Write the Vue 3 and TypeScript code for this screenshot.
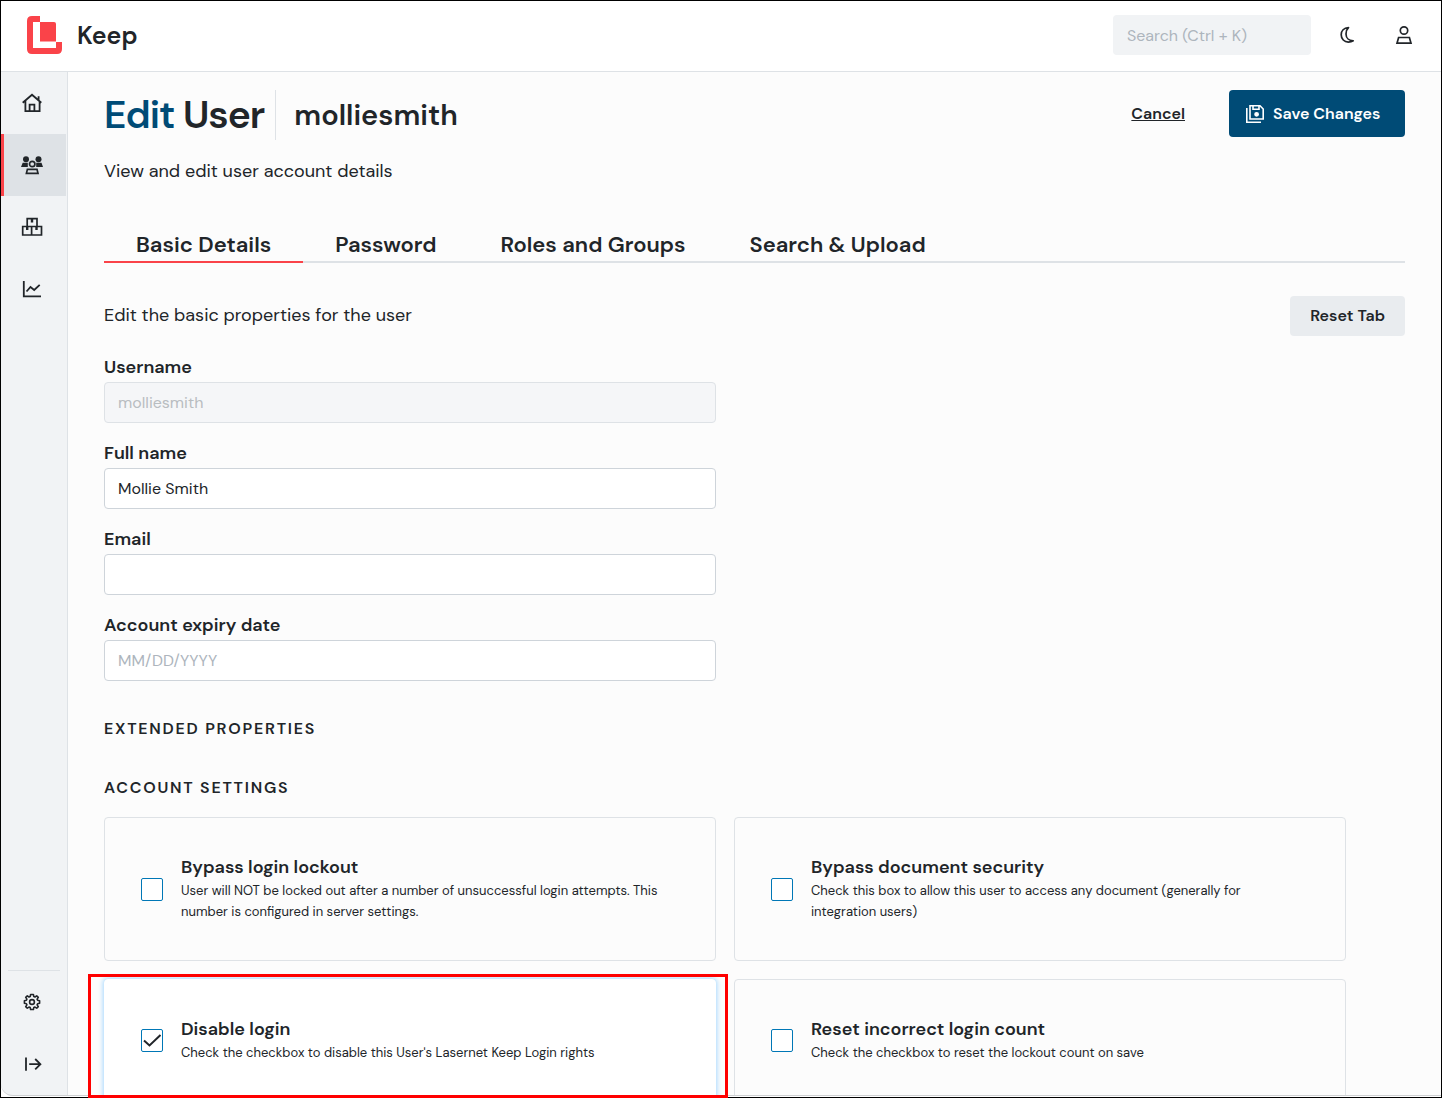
<script setup lang="ts">
import { reactive, ref } from 'vue'

interface Setting {
  id: string
  title: string
  text: string
  checked: boolean
  marked?: boolean
}

const tabs: string[] = ['Basic Details', 'Password', 'Roles and Groups', 'Search & Upload']
const activeTab = ref<string>(tabs[0])

const form = reactive({
  username: 'molliesmith',
  fullName: 'Mollie Smith',
  email: '',
  expiry: '',
})

const settings = reactive<Setting[]>([
  {
    id: 'bypass-lockout',
    title: 'Bypass login lockout',
    text: 'User will NOT be locked out after a number of unsuccessful login attempts. This number is configured in server settings.',
    checked: false,
  },
  {
    id: 'bypass-security',
    title: 'Bypass document security',
    text: 'Check this box to allow this user to access any document (generally for integration users)',
    checked: false,
  },
  {
    id: 'disable-login',
    title: 'Disable login',
    text: "Check the checkbox to disable this User's Lasernet Keep Login rights",
    checked: true,
    marked: true,
  },
  {
    id: 'reset-count',
    title: 'Reset incorrect login count',
    text: 'Check the checkbox to reset the lockout count on save',
    checked: false,
  },
])
</script>

<template>
  <div class="shell">
    <header class="topbar">
      <a class="brand" href="#">
        <svg class="logo" viewBox="0 0 36 38" aria-hidden="true">
          <path fill="#fa4349" d="M5 0H13V6H6V32H29V26H35V33Q35 38 30 38H5Q0 38 0 33V5Q0 0 5 0Z" />
          <path fill="#fa4349" d="M13 6H27Q29 6 29 8V25.500H13Z" />
        </svg>
        <span>Keep</span>
      </a>
      <div class="tools">
        <input class="search" type="search" placeholder="Search (Ctrl + K)" aria-label="Search" />
        <button class="icon-btn" type="button" aria-label="Dark mode">
          <svg width="20" height="20" viewBox="0 0 20 20" fill="none" stroke="#212529" stroke-width="1.700" stroke-linejoin="round">
            <path d="M11.500 2.700C6.800 2.800 4.200 5.800 4.200 9.800c0 4.200 3.100 7.300 7.100 7.300 1.900 0 3.600-.4 4.900-1.300C12.200 15.600 9 13 9 8.900 9 6.200 9.900 4.200 11.500 2.700Z" />
          </svg>
        </button>
        <button class="icon-btn" type="button" aria-label="Account">
          <svg width="20" height="20" viewBox="0 0 20 20" fill="none" stroke="#212529" stroke-width="1.700">
            <circle cx="10" cy="5.500" r="3.700" />
            <path d="M4.600 12.500H15.400L17 18.200H3Z" />
          </svg>
        </button>
      </div>
    </header>

    <div class="body">
      <nav class="sidebar" aria-label="Main">
        <a class="nav-item" href="#" aria-label="Home">
          <svg width="22" height="22" viewBox="0 0 22 22" fill="none" stroke="#212529" stroke-width="1.800">
            <path d="M1.700 10.700 11 2.800 20.300 10.700M4.400 8.800V19.200H18.600V8.800M17.600 8V4.200" />
            <path d="M8.600 19V12.700H13.400V19" />
          </svg>
        </a>
        <a class="nav-item active" href="#" aria-label="Users" aria-current="page">
          <svg width="22" height="22" viewBox="0 0 22 22">
            <g fill="#212529">
              <circle cx="5" cy="5.200" r="3" />
              <circle cx="17.500" cy="5.200" r="3" />
              <path d="M1.700 8.700H6.800V13H0Z M15.200 8.700H20.500L22 13H15.200Z" />
            </g>
            <g fill="none" stroke="#212529" stroke-width="1.700">
              <circle cx="11.200" cy="10" r="2.700" />
              <path d="M6.400 15.400H16L17 19.300H5.400Z" />
            </g>
          </svg>
        </a>
        <a class="nav-item" href="#" aria-label="Packages">
          <svg width="22" height="22" viewBox="0 0 22 22" fill="none" stroke="#212529" stroke-width="1.700">
            <path d="M6.200 10.500V2.700H16V10.500M1.700 10.500H10.600V19H1.700ZM10.600 10.500H20.500V19H10.600" />
            <path d="M11 2.700V6.500M6.200 10.500V14M15.500 10.500V14" stroke-width="2.400" />
          </svg>
        </a>
        <a class="nav-item" href="#" aria-label="Statistics">
          <svg width="22" height="22" viewBox="0 0 22 22" fill="none" stroke="#212529" stroke-width="1.800">
            <path d="M2.800 3V18.300H20M5.500 13.500 9.500 9 13.200 12 18.700 6.800" />
          </svg>
        </a>
        <div class="nav-bottom">
          <a class="nav-item" href="#" aria-label="Settings">
            <svg width="18" height="18" viewBox="0 0 18 18" fill="none" stroke="#212529" stroke-width="1.600" stroke-linejoin="round">
              <path d="M7.600 1.500H10.400L10.800 3.500 12 4 13.700 2.900 15.300 4.400 14.100 6.100 14.600 7.300 16.600 7.700V10.300L14.600 10.700 14.100 11.900 15.300 13.600 13.700 15.200 12 14.100 10.800 14.600 10.400 16.500H7.600L7.200 14.600 6 14.100 4.300 15.200 2.700 13.600 3.900 11.900 3.400 10.700 1.400 10.300V7.700L3.400 7.300 3.900 6.100 2.700 4.400 4.300 2.900 6 4 7.200 3.500Z" />
              <circle cx="9" cy="9" r="2.400" />
            </svg>
          </a>
          <a class="nav-item" href="#" aria-label="Expand menu">
            <svg width="22" height="22" viewBox="0 0 22 22" fill="none" stroke="#212529" stroke-width="1.800">
              <path d="M5 4.500V17.800M8.200 11.200H19.500M14.200 6 19.400 11.200 14.200 16.400" />
            </svg>
          </a>
        </div>
      </nav>

      <main class="content">
        <div class="page-head">
          <h1><span class="accent">Edit</span> User</h1>
          <h2>{{ form.username }}</h2>
          <div class="actions">
            <a class="cancel" href="#">Cancel</a>
            <button class="save" type="button">
              <svg width="20" height="20" viewBox="0 0 20 20" fill="none" stroke="#fff" stroke-width="1.600">
                <path d="M1.800 4V18.200H16" />
                <path d="M5 1.800H15L18.200 5V15H5Z" />
                <path d="M8 2V5.200H14V2" />
                <circle cx="11.600" cy="10.300" r="1.600" fill="#fff" />
              </svg>
              Save Changes
            </button>
          </div>
        </div>
        <p class="lead">View and edit user account details</p>

        <div class="tabs" role="tablist">
          <button
            v-for="tab in tabs"
            :key="tab"
            type="button"
            role="tab"
            class="tab"
            :class="{ selected: tab === activeTab }"
            :aria-selected="tab === activeTab"
            @click="activeTab = tab"
          >{{ tab }}</button>
        </div>

        <div class="intro">
          <p>Edit the basic properties for the user</p>
          <button class="reset" type="button">Reset Tab</button>
        </div>

        <form @submit.prevent>
          <div class="fields">
            <div class="field">
              <label for="username">Username</label>
              <input id="username" v-model="form.username" type="text" disabled />
            </div>
            <div class="field">
              <label for="fullname">Full name</label>
              <input id="fullname" v-model="form.fullName" type="text" />
            </div>
            <div class="field">
              <label for="email">Email</label>
              <input id="email" v-model="form.email" type="email" />
            </div>
            <div class="field">
              <label for="expiry">Account expiry date</label>
              <input id="expiry" v-model="form.expiry" type="text" placeholder="MM/DD/YYYY" />
            </div>
          </div>

          <h3>Extended properties</h3>
          <h3>Account settings</h3>

          <div class="cards">
            <div v-for="s in settings" :key="s.id" class="card" :class="{ on: s.checked }">
              <input :id="s.id" v-model="s.checked" type="checkbox" />
              <label :for="s.id">
                <strong>{{ s.title }}</strong>
                <span>{{ s.text }}</span>
              </label>
              <div v-if="s.marked" class="callout"></div>
            </div>
          </div>
        </form>
      </main>
    </div>
  </div>
</template>

<style>
body {
  margin: 0;
  background: #fff;
}
</style>

<style scoped>
* {
  box-sizing: border-box;
}

.shell {
  position: relative;
  display: flex;
  flex-direction: column;
  height: 100vh;
  padding: 1px;
  overflow: hidden;
  background: #fcfcfc;
  color: #212529;
  font: 400 16px/24px "DM Sans", Inter, "Open Sans", sans-serif;
}

/* rounded window edge, inside the black frame */
.shell::before {
  content: "";
  position: absolute;
  inset: 1px 1px 2px;
  z-index: 1;
  border-bottom: 1px solid #ced0d2;
  border-radius: 8px 0 0 12px;
  box-shadow: 0 0 0 6px #fff;
  pointer-events: none;
}

.shell::after {
  content: "";
  position: absolute;
  inset: 0;
  z-index: 1;
  border: 1px solid #000;
  pointer-events: none;
}

h1, h2, h3, p {
  margin: 0;
}

button, input {
  font: inherit;
  color: inherit;
}

button {
  border: 0;
  background: none;
  cursor: pointer;
}

a {
  color: inherit;
}

.topbar {
  display: flex;
  flex: none;
  align-items: center;
  justify-content: space-between;
  height: 71px;
  padding: 0 27px 2px 26px;
  border-bottom: 1px solid #dee2e6;
  background: #fff;
}

.brand {
  display: flex;
  align-items: center;
  gap: 14px;
  font-size: 25px;
  font-weight: 600;
  line-height: 36px;
  text-decoration: none;
}

.brand span {
  padding-top: 2px;
}

.logo {
  width: 36px;
  height: 38px;
}

.tools {
  display: flex;
  align-items: center;
}

.search {
  width: 198px;
  height: 40px;
  margin-right: 26px;
  padding: 0 14px;
  border: 0;
  border-radius: 4px;
  background: #f1f3f5;
  outline: none;
}

input::placeholder {
  color: #adb5bd;
  opacity: 1;
}

.icon-btn {
  display: flex;
  padding: 0;
}

.icon-btn + .icon-btn {
  margin-left: 37px;
}

.body {
  display: flex;
  flex: 1;
  min-height: 0;
}

.sidebar {
  display: flex;
  flex: none;
  flex-direction: column;
  width: 67px;
  padding-bottom: 2px;
  border-right: 1px solid #dee2e6;
  background: #f1f3f5;
}

.nav-item {
  display: flex;
  align-items: center;
  justify-content: center;
  height: 62px;
  margin-right: 1px;
  padding-right: 3px;
}

.nav-item.active {
  border-left: 3px solid #fa4349;
  padding-right: 6px;
  background: #dee2e6;
}

.nav-bottom {
  margin-top: auto;
}

.nav-bottom::before {
  content: "";
  display: block;
  height: 1px;
  margin: 0 7px;
  background: #dee2e6;
}

.content {
  flex: 1;
  min-width: 0;
  padding: 18px 36px 0;
}

.page-head {
  display: flex;
  height: 50px;
}

h1 {
  padding-right: 11px;
  border-right: 1px solid #dee2e6;
  font-size: 39px;
  font-weight: 600;
  line-height: 50px;
  letter-spacing: -1px;
  white-space: nowrap;
}

.accent {
  color: #004b76;
}

h2 {
  padding-left: 18px;
  font-size: 29px;
  font-weight: 600;
  line-height: 50px;
}

.actions {
  display: flex;
  align-items: flex-start;
  gap: 44px;
  margin-left: auto;
}

.cancel {
  font-weight: 600;
  line-height: 48px;
}

.save {
  display: flex;
  align-items: center;
  gap: 8px;
  min-width: 176px;
  height: 47px;
  padding: 0 16px;
  border-radius: 4px;
  background: #004b76;
  color: #fff;
  font-weight: 600;
}

.lead {
  margin-top: 19px;
  font-size: 18px;
}

.tabs {
  display: flex;
  margin-top: 46px;
  box-shadow: inset 0 -2px #dee2e6;
}

.tab {
  padding: 0 32px;
  border-bottom: 2px solid transparent;
  font-size: 22px;
  font-weight: 600;
  line-height: 32px;
}

.tab.selected {
  border-color: #fa4349;
}

.intro {
  display: flex;
  align-items: center;
  justify-content: space-between;
  margin-top: 33px;
  font-size: 18px;
}

.intro p {
  padding-bottom: 2px;
}

.reset {
  height: 40px;
  padding: 0 20px;
  border-radius: 4px;
  background: #e9ecef;
  font-size: 16px;
  font-weight: 600;
}

.fields {
  display: grid;
  gap: 17px;
  max-width: 612px;
  margin-top: 18px;
}

.field label {
  display: block;
  margin-bottom: 2px;
  font-size: 18px;
  font-weight: 600;
  line-height: 26px;
}

.field input {
  display: block;
  width: 100%;
  height: 41px;
  padding: 0 13px;
  border: 1px solid #ced4da;
  border-radius: 4px;
  background: #fff;
}

.field input:disabled {
  border-color: #dee2e6;
  background: #f5f6f8;
  color: #b9bdc1;
}

h3 {
  margin-top: 35px;
  font-size: 16px;
  font-weight: 600;
  letter-spacing: 0.11em;
  text-transform: uppercase;
}

.fields + h3 {
  margin-top: 36px;
}

.cards {
  display: grid;
  grid-template-columns: 1fr 1fr;
  gap: 18px;
  max-width: 1242px;
  margin-top: 17px;
}

.card {
  position: relative;
  display: flex;
  align-items: center;
  gap: 18px;
  padding: 36px;
  border: 1px solid #dee2e6;
  border-radius: 4px;
}

.card.on {
  border-color: #fff;
  background: #fff;
  box-shadow: 0 0 5px 1px #a5d8ff;
}

.card input {
  flex: none;
  appearance: none;
  width: 22px;
  height: 23px;
  margin: 0;
  border: 1px solid #0077b6;
  border-radius: 2px;
  background: #fff;
}

.card input:checked {
  background: #fff url("data:image/svg+xml,%3Csvg xmlns='http://www.w3.org/2000/svg' viewBox='0 0 20 21'%3E%3Cpath d='M2 10.500 7.500 15.500 18.500 5' fill='none' stroke='%23212529' stroke-width='2'/%3E%3C/svg%3E") center / 20px 21px no-repeat;
}

.card label {
  padding-bottom: 2px;
}

.card strong {
  display: block;
  font-size: 18px;
  font-weight: 600;
  line-height: 26px;
}

.card span {
  display: block;
  font-size: 13px;
  line-height: 21px;
}

/* highlight frame around the setting */
.callout {
  position: absolute;
  top: -6px;
  left: -17px;
  z-index: 2;
  width: calc(100% + 30px);
  height: 124px;
  border: 3px solid #f00;
  pointer-events: none;
}
</style>
